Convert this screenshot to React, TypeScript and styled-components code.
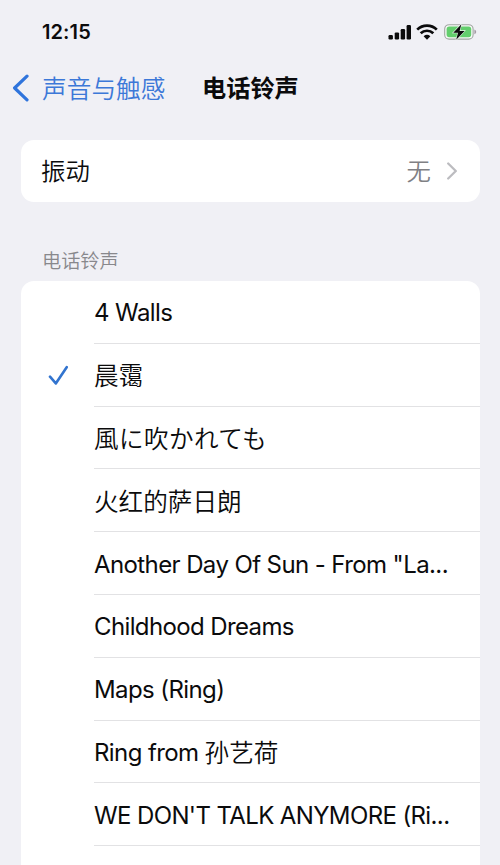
import React from "react";
import styled, { createGlobalStyle } from "styled-components";

const Global = createGlobalStyle`
  * { box-sizing: border-box; }
  html, body { margin: 0; background: #f0f0f5; overflow: hidden; }
`;

const Screen = styled.main`
  width: 500px;
  height: 865px;
  overflow: hidden;
  background: #f0f0f5;
  color: #0b0b0c;
  font-family: Inter, "Noto Sans CJK SC", sans-serif;
  display: flex;
  flex-direction: column;
`;

const StatusBar = styled.header`
  height: 58px;
  flex: none;
  display: flex;
  align-items: center;
  justify-content: space-between;
  padding: 5px 23px 0 42px;
`;

const Clock = styled.time`
  font-size: 20px;
  font-weight: 600;
  line-height: 24px;
  padding-top: 1px;
  letter-spacing: 0.1px;
`;

const StatusIcons = styled.div`
  display: flex;
  align-items: center;
`;

const NavBar = styled.nav`
  height: 60px;
  flex: none;
  display: flex;
  align-items: center;
  padding-left: 12px;
`;

const BackLink = styled.span`
  display: flex;
  align-items: center;
  gap: 12px;
  width: 190px;
  color: #3c78d8;
  font-size: 24.7px;
  font-weight: 350;
  line-height: 36px;
  white-space: nowrap;
`;

const BackText = styled.span`
  padding-top: 1px;
`;

const Title = styled.h1`
  margin: 0;
  padding-top: 2px;
  font-size: 24.2px;
  line-height: 36px;
  font-weight: 700;
`;

const Body = styled.div`
  display: flex;
  flex-direction: column;
  padding-top: 22px;
`;

const Card = styled.section`
  flex: none;
  margin: 0 20px 0 21px;
  background: #fff;
  border-radius: 13px;
  overflow: hidden;
`;

const SettingRow = styled.div`
  height: 62px;
  display: flex;
  align-items: center;
  padding: 0 22px 0 20px;
  font-size: 24.4px;
  font-weight: 350;
`;

const SettingName = styled.span`
  padding-bottom: 3px;
`;

const SettingValue = styled.span`
  margin-left: auto;
  margin-right: 15px;
  padding-bottom: 3px;
  color: #808084;
`;

const SectionLabel = styled.h2`
  margin: 0;
  height: 79px;
  flex: none;
  padding: 44px 0 0 42px;
  font-size: 19.2px;
  line-height: 30px;
  font-weight: 350;
  color: #88888c;
`;

const ToneRow = styled.div`
  height: 62.8px;
  display: flex;
`;

const CheckSlot = styled.div`
  width: 73px;
  flex: none;
  display: flex;
  align-items: center;
  padding-left: 27px;
`;

const ToneName = styled.div<{ $tracking: number }>`
  flex: 1;
  min-width: 0;
  display: flex;
  align-items: center;
  border-bottom: 1px solid #e2e2e4;
  font-size: 24px;
  white-space: pre;
  letter-spacing: ${(p) => p.$tracking}px;
`;

const Latin = styled.span`
  padding-top: 2px;
`;

const Cjk = styled.span<{ $lang?: string; $tracking?: number }>`
  font-family: "Noto Sans CJK SC", sans-serif;
  font-size: 24.6px;
  font-weight: 350;
  line-height: 36px;
  padding-bottom: 1px;
  letter-spacing: ${(p) => p.$tracking ?? 0}px;
`;

type Tone = {
  latin?: string;
  cjk?: string;
  tracking?: number;
  cjkTracking?: number;
  checked?: boolean;
};

const tones: Tone[] = [
  { latin: "4 Walls", tracking: -0.6 },
  { cjk: "晨霭", checked: true },
  { cjk: "風に吹かれても", cjkTracking: 0.4 },
  { cjk: "火红的萨日朗" },
  { latin: 'Another Day Of Sun - From "La...', tracking: -0.6 },
  { latin: "Childhood Dreams", tracking: -0.62 },
  { latin: "Maps (Ring)", tracking: -0.6 },
  { latin: "Ring from ", cjk: "孙艺荷", tracking: -0.6 },
  { latin: "WE DON'T TALK ANYMORE (Ri...", tracking: -0.62 },
  {},
];

const Signal = () => (
  <svg width="24" height="18" viewBox="0 0 24 18" fill="#0b0b0c">
    <rect x="0.5" y="12" width="4.4" height="4.5" rx="1.2" />
    <rect x="6.7" y="9.4" width="4.4" height="7.1" rx="1.2" />
    <rect x="12.7" y="6" width="4.4" height="10.5" rx="1.2" />
    <rect x="18.6" y="2" width="4.4" height="14.5" rx="1.2" />
  </svg>
);

const WifiFrame = styled.svg`
  margin: 0 6px 0 4px;
`;

const Wifi = () => (
  <WifiFrame width="22" height="18" viewBox="0 0 22 18">
    <g fill="none" stroke="#0b0b0c" strokeWidth="2.7">
      <path d="M1.2 6.6a14 14 0 0 1 19.6 0" />
      <path d="M4.7 10.3a9 9 0 0 1 12.6 0" />
    </g>
    <path d="M11 16.8 7.6 13.3a5.2 5.2 0 0 1 6.8 0z" fill="#0b0b0c" />
  </WifiFrame>
);

const Battery = () => (
  <svg width="33" height="18" viewBox="0 0 33 18">
    <rect x="0.7" y="1.7" width="28.4" height="14.4" rx="4.4" fill="#f7faf7" stroke="#a0a5a1" strokeWidth="1.1" />
    <rect x="2.6" y="3.6" width="24.6" height="10.6" rx="2.6" fill="#63ce6d" />
    <path d="M30.4 6.5c2.4.9 2.4 3.9 0 4.8z" fill="#a39ca4" />
    <path d="M17.4 1.2 9.2 9.8h4.8l-1.8 7 8.4-8.9h-5z" fill="#0b0b0c" stroke="#f0f5f0" strokeWidth="1.1" paintOrder="stroke" />
  </svg>
);

const BackChevron = () => (
  <svg width="18" height="28" viewBox="0 0 18 28" fill="none" stroke="#2f74dc" strokeWidth="3.2" strokeLinecap="round" strokeLinejoin="round">
    <path d="M15 2.2 2.6 14 15 25.8" />
  </svg>
);

const ForwardChevron = () => (
  <svg width="12" height="18" viewBox="0 0 12 18" fill="none" stroke="#bcbcc0" strokeWidth="2.3" strokeLinecap="round" strokeLinejoin="round">
    <path d="M2.2 1.5 9.8 9 2.2 16.5" />
  </svg>
);

const Check = () => (
  <svg width="21" height="20" viewBox="0 0 21 20" fill="none" stroke="#3274cf" strokeWidth="2.6" strokeLinecap="round" strokeLinejoin="round">
    <path d="M2 11.7 7.8 18.4 18.7 2.2" />
  </svg>
);

export default function App() {
  return (
    <Screen>
      <Global />
      <StatusBar>
        <Clock>12:15</Clock>
        <StatusIcons>
          <Signal />
          <Wifi />
          <Battery />
        </StatusIcons>
      </StatusBar>
      <NavBar>
        <BackLink>
          <BackChevron />
          <BackText>声音与触感</BackText>
        </BackLink>
        <Title>电话铃声</Title>
      </NavBar>
      <Body>
        <Card>
          <SettingRow>
            <SettingName>振动</SettingName>
            <SettingValue>无</SettingValue>
            <ForwardChevron />
          </SettingRow>
        </Card>
        <SectionLabel>电话铃声</SectionLabel>
        <Card>
          {tones.map((t, i) => (
            <ToneRow key={i}>
              <CheckSlot>{t.checked && <Check />}</CheckSlot>
              <ToneName $tracking={t.tracking ?? 0}>
                {t.latin && <Latin>{t.latin}</Latin>}
                {t.cjk && <Cjk $tracking={t.cjkTracking}>{t.cjk}</Cjk>}
              </ToneName>
            </ToneRow>
          ))}
        </Card>
      </Body>
    </Screen>
  );
}
